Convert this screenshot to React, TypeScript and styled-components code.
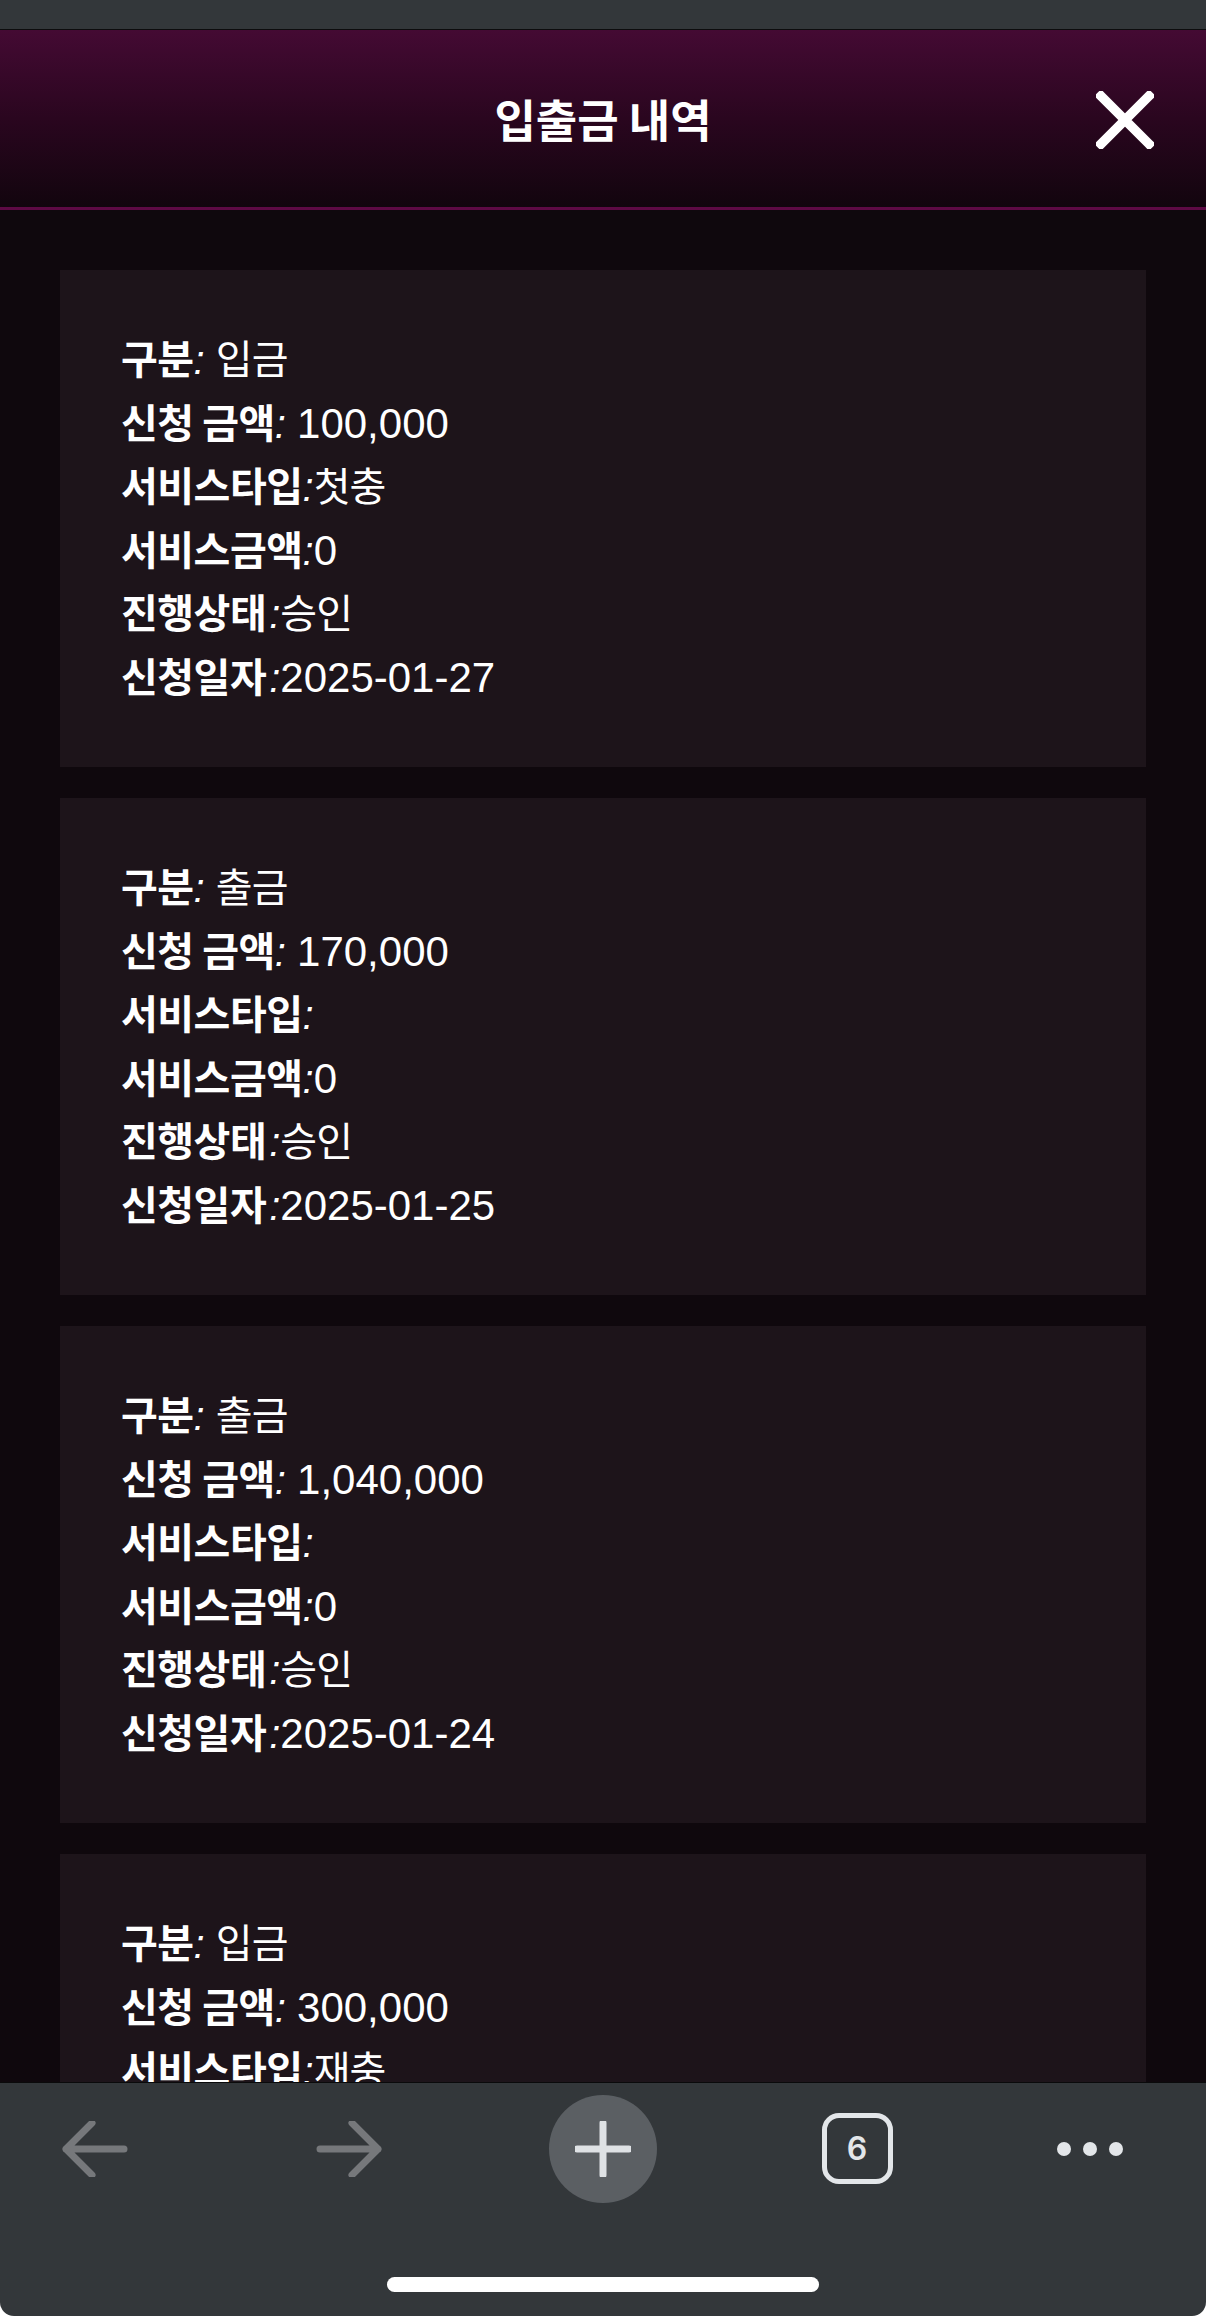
import React from "react";
import styled, { createGlobalStyle } from "styled-components";

interface Entry {
  kind: string;
  amount: string;
  serviceType: string;
  serviceAmount: string;
  status: string;
  date: string;
}

const entries: Entry[] = [
  { kind: "입금", amount: "100,000", serviceType: "첫충", serviceAmount: "0", status: "승인", date: "2025-01-27" },
  { kind: "출금", amount: "170,000", serviceType: "", serviceAmount: "0", status: "승인", date: "2025-01-25" },
  { kind: "출금", amount: "1,040,000", serviceType: "", serviceAmount: "0", status: "승인", date: "2025-01-24" },
  { kind: "입금", amount: "300,000", serviceType: "재충", serviceAmount: "0", status: "승인", date: "2025-01-22" },
];

const hasHangul = (s: string) => /[가-힣]/.test(s);

const Line: React.FC<{ label: string; value: string; spaced?: boolean; trail?: boolean }> = ({
  label,
  value,
  spaced,
  trail,
}) => (
  <Row>
    <Label $trail={!!trail}>{label}</Label>
    <Colon>:</Colon>
    {spaced && " "}
    <Value $hangul={hasHangul(value)}>{value}</Value>
  </Row>
);

export default function App() {
  return (
    <>
      <GlobalStyle />
      <Screen>
        <StatusBar />
        <Header>
          <span />
          <Title>입출금 내역</Title>
          <Close aria-label="닫기">
            <svg width="58" height="58" viewBox="0 0 58 58">
              <path d="M5 5L53 53M53 5L5 53" stroke="#fff" strokeWidth="9.5" strokeLinecap="square" />
            </svg>
          </Close>
        </Header>
        <Content>
          {entries.map((e, i) => (
            <Card key={i}>
              <Line label="구분" value={e.kind} spaced />
              <Line label="신청 금액" value={e.amount} spaced />
              <Line label="서비스타입" value={e.serviceType} />
              <Line label="서비스금액" value={e.serviceAmount} />
              <Line label="진행상태" value={e.status} trail />
              <Line label="신청일자" value={e.date} trail />
            </Card>
          ))}
        </Content>
        <BottomBar>
          <Toolbar>
            <NavButton>
              <svg width="66" height="56" viewBox="0 0 66 56" fill="none">
                <path d="M4 28H62M30 2L4 28L30 54" stroke="#76787b" strokeWidth="7" strokeLinecap="round" strokeLinejoin="round" />
              </svg>
            </NavButton>
            <NavButton>
              <svg width="66" height="56" viewBox="0 0 66 56" fill="none">
                <path d="M62 28H4M36 2L62 28L36 54" stroke="#76787b" strokeWidth="7" strokeLinecap="round" strokeLinejoin="round" />
              </svg>
            </NavButton>
            <NewTab>
              <svg width="56" height="56" viewBox="0 0 56 56" fill="none">
                <path d="M28 2V54M2 28H54" stroke="#dfe2e5" strokeWidth="7" strokeLinecap="round" />
              </svg>
            </NewTab>
            <NavButton>
              <TabCount>6</TabCount>
            </NavButton>
            <More>
              <Dot />
              <Dot />
              <Dot />
            </More>
          </Toolbar>
          <HomeIndicator />
        </BottomBar>
      </Screen>
    </>
  );
}

const GlobalStyle = createGlobalStyle`
  html, body {
    margin: 0;
    padding: 0;
    background: #ffffff;
  }
  * {
    box-sizing: border-box;
  }
`;

const Screen = styled.div`
  width: 1206px;
  height: 2316px;
  display: flex;
  flex-direction: column;
  overflow: hidden;
  font-family: "Liberation Sans", "Noto Sans CJK KR", sans-serif;
  color: #ffffff;
`;

const StatusBar = styled.div`
  height: 30px;
  flex-shrink: 0;
  background: #33373a;
  border-bottom: 1px solid #0c0c0d;
`;

const Header = styled.header`
  height: 180px;
  flex-shrink: 0;
  display: grid;
  grid-template-columns: 1fr auto 1fr;
  align-items: center;
  background: linear-gradient(180deg, #440a33 0%, #2a061f 50%, #12050e 100%);
  border-bottom: 3px solid #5e0a45;
`;

const Title = styled.h1`
  margin: 0;
  font-family: "Noto Sans CJK KR", sans-serif;
  font-size: 45px;
  font-weight: 700;
  color: #ffffff;
`;

const Close = styled.button`
  justify-self: end;
  display: flex;
  padding: 0;
  margin: 2px 52px 0 0;
  background: none;
  border: none;
`;

const Content = styled.main`
  flex: 1;
  min-height: 0;
  overflow: hidden;
  display: flex;
  flex-direction: column;
  gap: 31px;
  padding: 60px 60px 0;
  background: #0f080d;
`;

const Card = styled.section`
  flex-shrink: 0;
  height: 497px;
  padding: 56px 61px 60px;
  background: #1d141a;
`;

const Row = styled.div`
  height: 63.5px;
  line-height: 63.5px;
  font-size: 40px;
  white-space: pre;
`;

const Label = styled.span<{ $trail: boolean }>`
  font-family: "Noto Sans CJK KR", sans-serif;
  font-weight: 700;
  letter-spacing: -0.5px;
  padding-right: ${(p) => (p.$trail ? "3px" : "0")};
`;

const Colon = styled.span`
  font-style: italic;
  font-weight: 400;
`;

const Value = styled.span<{ $hangul: boolean }>`
  font-weight: 400;
  font-size: ${(p) => (p.$hangul ? "40px" : "42px")};
  letter-spacing: ${(p) => (p.$hangul ? "-1px" : "0")};
`;

const BottomBar = styled.footer`
  height: 234px;
  flex-shrink: 0;
  display: flex;
  flex-direction: column;
  background: #33373a;
  border-top: 1px solid #0a0a0b;
  border-radius: 0 0 14px 14px;
`;

const Toolbar = styled.nav`
  height: 131px;
  display: flex;
  align-items: center;
  gap: 146px;
  padding-left: 41px;
`;

const NavButton = styled.div`
  width: 108px;
  height: 108px;
  display: flex;
  align-items: center;
  justify-content: center;
`;

const NewTab = styled(NavButton)`
  border-radius: 50%;
  background: #5b5f63;
`;

const TabCount = styled.div`
  width: 71px;
  height: 71px;
  display: flex;
  align-items: center;
  justify-content: center;
  border: 5px solid #e3e6e9;
  border-radius: 17px;
  color: #e3e6e9;
  font-family: Inter, "Liberation Sans", sans-serif;
  font-size: 32px;
  font-weight: 600;
`;

const More = styled.div`
  width: 66px;
  height: 108px;
  display: flex;
  align-items: center;
  justify-content: space-between;
`;

const Dot = styled.span`
  width: 14px;
  height: 14px;
  border-radius: 50%;
  background: #e3e6e9;
`;

const HomeIndicator = styled.div`
  width: 432px;
  height: 15px;
  margin: 63px auto 0;
  border-radius: 8px;
  background: #ffffff;
`;
